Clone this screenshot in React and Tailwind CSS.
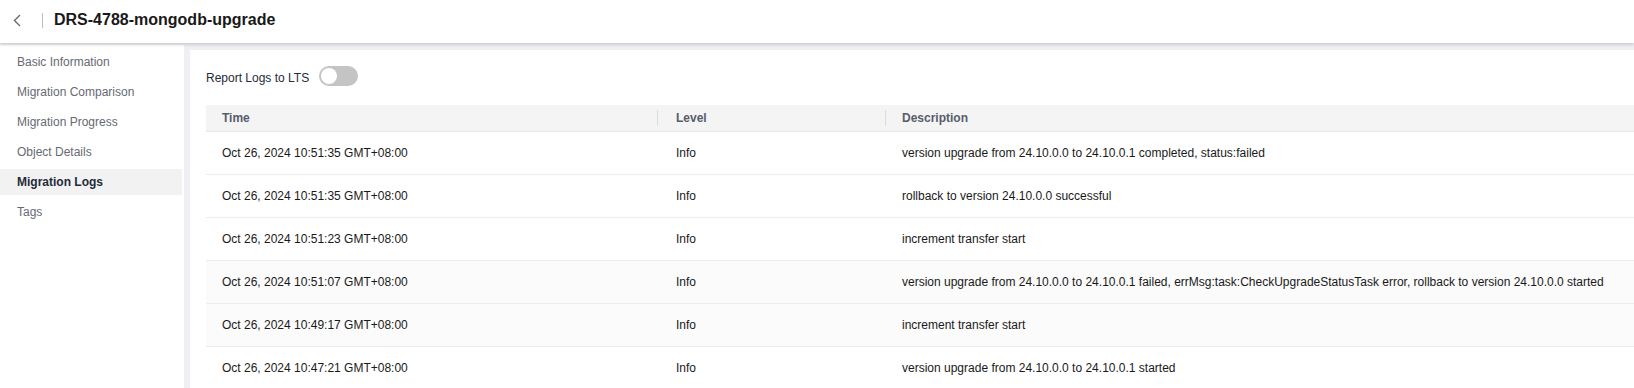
const menu = [
  'Basic Information',
  'Migration Comparison',
  'Migration Progress',
  'Object Details',
  'Migration Logs',
  'Tags',
]

const logs = [
  { time: 'Oct 26, 2024 10:51:35 GMT+08:00', level: 'Info', desc: 'version upgrade from 24.10.0.0 to 24.10.0.1 completed, status:failed' },
  { time: 'Oct 26, 2024 10:51:35 GMT+08:00', level: 'Info', desc: 'rollback to version 24.10.0.0 successful' },
  { time: 'Oct 26, 2024 10:51:23 GMT+08:00', level: 'Info', desc: 'increment transfer start' },
  { time: 'Oct 26, 2024 10:51:07 GMT+08:00', level: 'Info', desc: 'version upgrade from 24.10.0.0 to 24.10.0.1 failed, errMsg:task:CheckUpgradeStatusTask error, rollback to version 24.10.0.0 started', shade: true },
  { time: 'Oct 26, 2024 10:49:17 GMT+08:00', level: 'Info', desc: 'increment transfer start', shade: true },
  { time: 'Oct 26, 2024 10:47:21 GMT+08:00', level: 'Info', desc: 'version upgrade from 24.10.0.0 to 24.10.0.1 started' },
]

export default function App() {
  const active = 'Migration Logs'

  return (
    <div className="h-screen overflow-hidden bg-[#eff0f4] font-['Liberation_Sans',Arial,sans-serif] text-[12px] text-[#191919]">
      {/* header */}
      <div className="relative z-10 h-[43px] bg-white flex items-center pb-[3px] shadow-[0_2px_3px_rgba(0,0,0,0.14)]">
        <svg width="8" height="13" viewBox="0 0 8 13" className="ml-[13px]" fill="none">
          <path d="M7 1 L1.5 6.5 L7 12" stroke="#5f6470" strokeWidth="1.3" />
        </svg>
        <div className="ml-[21px] w-px h-[15px] bg-[#b8bcc4]" />
        <h1 className="ml-[11px] text-[16px] font-bold text-[#191919]">DRS-4788-mongodb-upgrade</h1>
      </div>

      <div className="flex h-full">
        {/* sidebar */}
        <div className="w-[184px] mt-[2px] bg-white pt-[4px] flex flex-col gap-1">
          {menu.map(m => (
            <div
              key={m}
              className={
                m === active
                  ? 'h-[26px] flex items-center pl-[17px] mr-[2px] bg-[#f2f2f2] font-bold text-[#252b3a]'
                  : 'h-[26px] flex items-center pl-[17px] text-[#666a72]'
              }
            >
              {m}
            </div>
          ))}
        </div>

        {/* content */}
        <div className="flex-1 ml-[6px] mt-[7px] bg-white pl-4">
          <div className="h-[39px] mt-[16px] flex items-start">
            <span className="mt-[3px] text-[#252b3a]">Report Logs to LTS</span>
            <button className="ml-[10px] w-[39px] h-[20px] rounded-full bg-[#c4c4c4] flex items-center px-[2px]">
              <span className="w-[16px] h-[16px] rounded-full bg-white" />
            </button>
          </div>

          <div>
            <div className="flex h-[27px] items-center bg-[#f4f4f4] border-b border-[#e9e9e9] font-semibold text-[#575d6c]">
              <div className="w-[452px] pl-4 flex items-center justify-between">
                <span>Time</span>
                <span className="w-px h-[16px] bg-[#dcdcdc]" />
              </div>
              <div className="w-[228px] pl-[18px] flex items-center justify-between">
                <span>Level</span>
                <span className="w-px h-[16px] bg-[#dcdcdc]" />
              </div>
              <div className="flex-1 pl-4">Description</div>
            </div>
            {logs.map((l, i) => (
              <div
                key={i}
                className={`flex h-[43px] items-center border-b border-[#ececec] ${l.shade ? 'bg-[#fbfbfb]' : 'bg-white'}`}
              >
                <div className="w-[452px] pl-4">{l.time}</div>
                <div className="w-[228px] pl-[18px]">{l.level}</div>
                <div className="flex-1 pl-4 whitespace-nowrap">{l.desc}</div>
              </div>
            ))}
          </div>
        </div>
      </div>
    </div>
  )
}
